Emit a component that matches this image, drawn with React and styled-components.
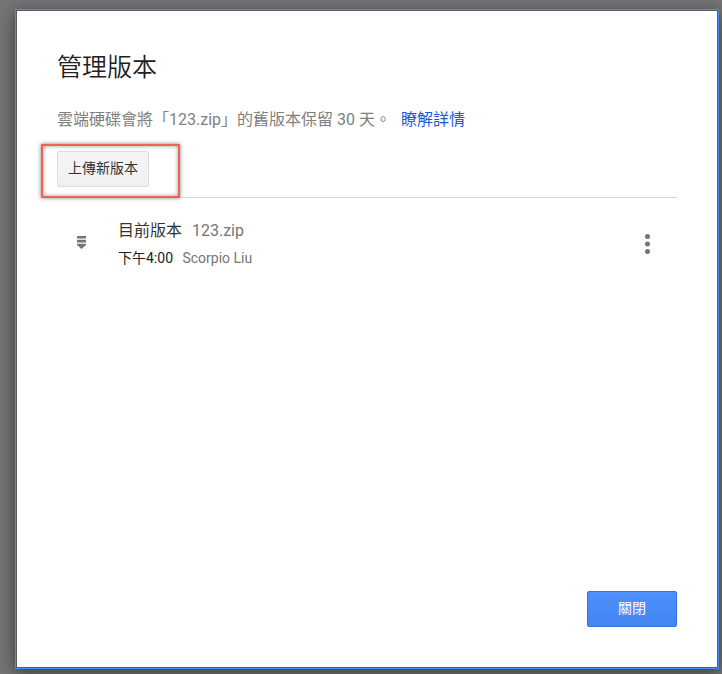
import React from 'react'
import styled, { createGlobalStyle } from 'styled-components'

const GlobalStyle = createGlobalStyle`
    * {
        box-sizing: border-box;
    }

    body {
        margin: 0;
        background: #757575;
        font-family: Roboto, 'Noto Sans CJK TC', sans-serif;
    }

    h1, p {
        margin: 0;
    }
`

function App() {
  return (
    <Page>
        <GlobalStyle />
        <Dialog role="dialog" aria-labelledby="title">
            <Title id="title">管理版本</Title>
            <Description>
                雲端硬碟會將「123.zip」的舊版本保留 30 天。 <a href="#">瞭解詳情</a>
            </Description>
            <Toolbar>
                <Button type="button">上傳新版本</Button>
                <Highlight />
            </Toolbar>
            <VersionList>
                <Version>
                    <FileIcon />
                    <Details>
                        <Name>目前版本 <span>123.zip</span></Name>
                        <Meta>下午4:00 <span>Scorpio Liu</span></Meta>
                    </Details>
                    <MoreButton type="button" aria-label="更多">
                        <MoreIcon />
                    </MoreButton>
                </Version>
            </VersionList>
            <Footer>
                <Button type="button" $primary>關閉</Button>
            </Footer>
        </Dialog>
    </Page>
  )
}

function FileIcon() {
  return (
    <svg width="10" height="16" viewBox="0 0 10 16" fill="#757575" aria-hidden="true">
        <path d="M0 0h9v2.6H0z M0 3.8h9v2.7H0z M0 7.7h9v1.3L4.5 13 0 9z" />
    </svg>
  )
}

function MoreIcon() {
  return (
    <svg width="6" height="20" viewBox="0 0 6 20" fill="#757575" aria-hidden="true">
        <circle cx="3.5" cy="2.5" r="2.5" />
        <circle cx="3.5" cy="10" r="2.5" />
        <circle cx="3.5" cy="17.5" r="2.5" />
    </svg>
  )
}

export default App

const Page = styled.main`
    display: flex;
    min-height: 100vh;
    padding: 9px 3px 5px 15px;
`

const Dialog = styled.section`
    flex: 1;
    display: flex;
    flex-direction: column;
    padding: 42px 40px 40px;
    background: #fff;
    border: 1px solid #4a8af4;
    box-shadow: inset 0 0 0 1px #5c5c5c, 0 4px 16px rgba(0, 0, 0, .5);
`

const Title = styled.h1`
    padding-left: 1px;
    font-size: 25px;
    font-weight: 350;
    line-height: 32px;
    color: #212121;
`

const Description = styled.p`
    margin-top: 24px;
    padding-left: 1px;
    font-size: 16px;
    line-height: 24px;
    color: #808080;

    a {
        margin-left: 6px;
        color: #1a5bd7;
        text-decoration: none;
    }
`

const Toolbar = styled.div`
    position: relative;
    margin: 19px 1px 0;
    padding-bottom: 10px;
    border-bottom: 1px solid #d8d8d8;
`

const Button = styled.button`
    min-width: ${(props) => (props.$primary ? '90px' : '0')};
    height: 36px;
    padding: 0 10px 4px;
    font-family: inherit;
    font-size: 14px;
    color: ${(props) => (props.$primary ? '#fff' : '#333')};
    background: ${(props) => (props.$primary
        ? 'linear-gradient(#4d90fe, #4485f0)'
        : 'linear-gradient(#f5f5f5, #f0f0f0)')};
    border: 1px solid ${(props) => (props.$primary ? '#2f72ec' : '#dcdcdc')};
    border-radius: 2px;
    cursor: pointer;
`

// marco rojo alrededor del boton de subir
const Highlight = styled.div`
    position: absolute;
    top: -7px;
    left: -16px;
    width: 139px;
    height: 54px;
    border: 2px solid #ee6352;
    box-shadow: 0 0 4px rgba(0, 0, 0, .5), inset 0 0 4px rgba(0, 0, 0, .4);
    pointer-events: none;
`

const VersionList = styled.ul`
    flex: 1;
    margin: 0 1px;
    padding: 18px 0;
    list-style: none;
`

const Version = styled.li`
    display: flex;
    align-items: center;
    padding: 0 24px 0 20px;
`

const Details = styled.div`
    flex: 1;
    margin-left: 31px;
    line-height: 28px;

    span {
        margin-left: 6px;
        color: #757575;
    }
`

const Name = styled.p`
    padding-top: 1px;
    font-size: 16px;
    color: #333;
`

const Meta = styled.p`
    font-size: 14px;
    line-height: 26px;
    color: #212121;
`

const MoreButton = styled.button`
    display: flex;
    padding: 0 3px;
    background: none;
    border: 0;
    cursor: pointer;
`

const Footer = styled.footer`
    display: flex;
    justify-content: flex-end;
    padding: 0 1px 1px;
`
